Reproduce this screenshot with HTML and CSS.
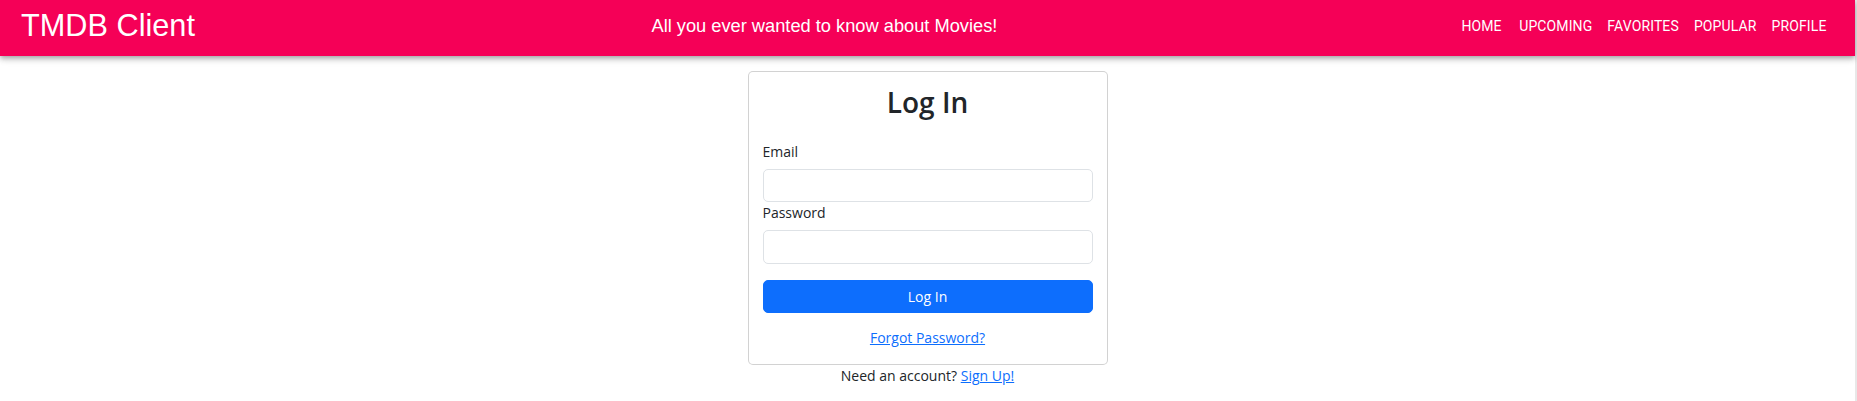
FILE: index.html
```html
<!DOCTYPE html>
<html lang="en">
<head>
<meta charset="utf-8">
<title>TMDB Client</title>
<link rel="stylesheet" href="styles.css">
</head>
<body>
<div class="page">
  <header class="appbar">
    <div class="brand">TMDB Client</div>
    <div class="tagline">All you ever wanted to know about Movies!</div>
    <nav class="nav">
      <a class="nav-btn nav-btn-first" href="#">Home</a>
      <a class="nav-btn" href="#">Upcoming</a>
      <a class="nav-btn" href="#">Favorites</a>
      <a class="nav-btn" href="#">Popular</a>
      <a class="nav-btn" href="#">Profile</a>
    </nav>
  </header>
  <main class="main">
    <div class="auth">
      <div class="card">
        <div class="card-body">
          <h2 class="card-title">Log In</h2>
          <form class="form">
            <div class="form-group">
              <label class="form-label" for="email">Email</label>
              <input class="form-control" id="email" type="email">
            </div>
            <div class="form-group">
              <label class="form-label" for="password">Password</label>
              <input class="form-control" id="password" type="password">
            </div>
            <button class="btn-primary" type="button">Log In</button>
          </form>
          <div class="forgot"><a href="#">Forgot Password?</a></div>
        </div>
      </div>
      <div class="signup">Need an account? <a href="#">Sign Up!</a></div>
    </div>
  </main>
</div>
</body>
</html>
```
FILE: styles.css
```css
html, body {
  margin: 0;
  padding: 0;
  background: #ffffff;
}
body {
  font-family: "Open Sans", "Noto Sans", sans-serif;
  font-size: 14px;
  line-height: 1.5;
  color: #212529;
}
.page {
  min-height: 401px;
  border-right: 2px solid #e8e8e8;
}
.appbar {
  display: flex;
  align-items: center;
  box-sizing: border-box;
  height: 56px;
  padding: 0 21px 4px 21px;
  background: #f50057;
  color: #ffffff;
  box-shadow: 0 2px 4px -1px rgba(0,0,0,0.2), 0 4px 5px 0 rgba(0,0,0,0.14), 0 1px 10px 0 rgba(0,0,0,0.12);
  position: relative;
  z-index: 1;
}
.brand {
  flex: 1 1 auto;
  font-family: "Liberation Sans", Arial, sans-serif;
  font-size: 30.7px;
  line-height: 1.235;
  font-weight: 400;
}
.tagline {
  flex: 1 1 auto;
  font-family: "Liberation Sans", Arial, sans-serif;
  font-size: 18.25px;
  line-height: 1.6;
  font-weight: 400;
}
.nav {
  display: flex;
  align-items: center;
}
.nav-btn {
  display: inline-flex;
  justify-content: center;
  padding: 6px 7.5px;
  font-family: Roboto, sans-serif;
  font-weight: 400;
  font-size: 14px;
  line-height: 1.75;
  letter-spacing: 0.12px;
  text-transform: uppercase;
  color: #ffffff;
  text-decoration: none;
}
.nav-btn-first {
  padding-right: 10px;
}
.main {
  display: flex;
  justify-content: center;
  padding-top: 15px;
}
.auth {
  width: 360px;
}
.card {
  border: 1px solid rgba(0,0,0,0.175);
  border-radius: 5px;
  background: #fff;
}
.card-body {
  padding: 14px 14px 16px 14px;
}
.card-title {
  margin: 0 0 21px 0;
  text-align: center;
  font-size: 28px;
  font-weight: 600;
  line-height: 1.2;
}
.form {
  margin: 0;
}
.form-label {
  display: inline-block;
  margin-bottom: 7px;
}
.form-control {
  display: block;
  width: 100%;
  box-sizing: border-box;
  padding: 5.25px 10.5px;
  font-family: inherit;
  font-size: 14px;
  line-height: 1.5;
  color: #212529;
  background: #fff;
  border: 1px solid #dee2e6;
  border-radius: 5px;
  margin: 0;
}
.btn-primary {
  display: block;
  width: 100%;
  margin-top: 16px;
  padding: 5.25px 10.5px;
  font-family: inherit;
  font-size: 14px;
  line-height: 1.5;
  color: #fff;
  background: #0d6efd;
  border: 1px solid #0d6efd;
  border-radius: 5px;
}
.forgot {
  margin-top: 14px;
  text-align: center;
}
.forgot a, .signup a {
  color: #0d6efd;
  text-decoration: underline;
}
.signup {
  margin-top: 0;
  text-align: center;
}
```
